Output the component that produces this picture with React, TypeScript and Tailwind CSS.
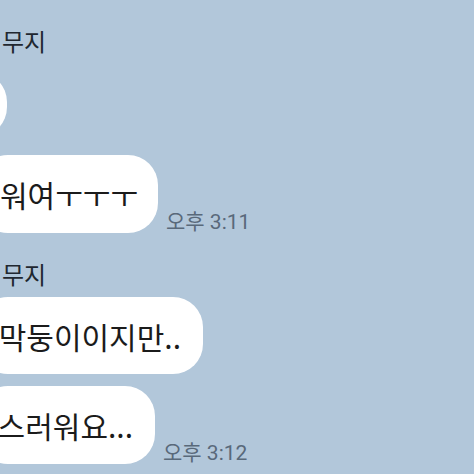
import React from "react";

const font = "font-['Noto_Sans_CJK_KR','Noto_Sans',sans-serif]";

const Bubble = ({
  text,
  width,
  left,
  height,
  pad,
}: {
  text: string;
  width: number;
  left: number;
  height: number;
  pad: number;
}) => (
  <div
    className="flex shrink-0 items-center justify-end overflow-hidden whitespace-nowrap rounded-[30px] bg-white text-[30px] leading-[38px] text-[#1b1b1b]"
    style={{ width, marginLeft: left, height, paddingRight: pad }}
  >
    {text}
  </div>
);

const Time = ({ label }: { label: string }) => (
  <span className="ml-[8px] whitespace-nowrap font-['Roboto','Noto_Sans_CJK_KR',sans-serif] text-[21px] leading-[22px] text-[#59697a]">
    {label}
  </span>
);

const App = () => {
  return (
    <div className={`h-[474px] w-[474px] overflow-hidden bg-[#b2c7da] ${font}`}>
      <div className="flex flex-col pt-[26px]">
        <div className="h-[30px] pl-[2px] text-[24px] leading-[30px] text-[#1f2730]">무지</div>
        <div className="mt-[16px] flex">
          <Bubble text="" width={60} left={-53} height={65} pad={0} />
        </div>
        <div className="mt-[18px] flex items-end">
          <Bubble text="워여ㅜㅜㅜ" width={180} left={-22} height={78} pad={20} />
          <Time label="오후 3:11" />
        </div>
        <div className="mt-[26px] h-[30px] pl-[2px] text-[24px] leading-[30px] text-[#1f2730]">무지</div>
        <div className="mt-[8px] flex">
          <Bubble text="막둥이이지만.." width={225} left={-22} height={77} pad={22} />
        </div>
        <div className="mt-[12px] flex items-end">
          <Bubble text="스러워요..." width={177} left={-22} height={78} pad={22} />
          <Time label="오후 3:12" />
        </div>
      </div>
    </div>
  );
};

export default App;
